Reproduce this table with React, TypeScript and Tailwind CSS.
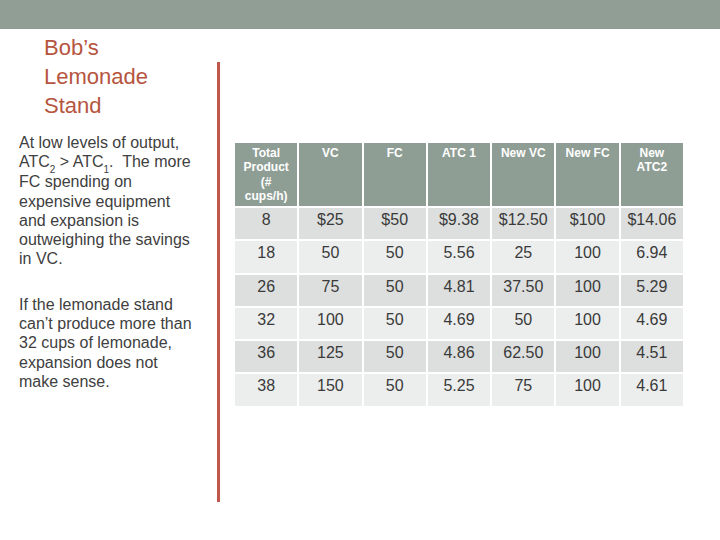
import React from 'react'

const headers = ['Total Product (# cups/h)', 'VC', 'FC', 'ATC 1', 'New VC', 'New FC', 'New ATC2']

const rows = [
  ['8', '$25', '$50', '$9.38', '$12.50', '$100', '$14.06'],
  ['18', '50', '50', '5.56', '25', '100', '6.94'],
  ['26', '75', '50', '4.81', '37.50', '100', '5.29'],
  ['32', '100', '50', '4.69', '50', '100', '4.69'],
  ['36', '125', '50', '4.86', '62.50', '100', '4.51'],
  ['38', '150', '50', '5.25', '75', '100', '4.61'],
]

export default function App() {
  return (
    <div className="w-[720px] h-[540px] bg-white overflow-hidden font-['Liberation_Sans',Arial,sans-serif]">
      {/* Top band */}
      <div className="h-[29px] bg-[#909e96]" />

      <div className="flex">
        {/* Left column */}
        <div className="w-[217px] shrink-0">
          <h1 className="pl-[44px] pt-[4px] text-[22px] leading-[29px] text-[#b6553f]">
            Bob’s
            <br />
            Lemonade
            <br />
            Stand
          </h1>

          <div className="pl-[19px] mt-[13px] text-[16px] leading-[19.3px] text-[#404040] whitespace-nowrap">
            <p>
              At low levels of output,
              <br />
              ATC<sub className="text-[10px] leading-none align-[-3px]">2</sub> &gt; ATC<sub className="text-[10px] leading-none align-[-3px]">1</sub>.&nbsp; The more
              <br />
              FC spending on
              <br />
              expensive equipment
              <br />
              and expansion is
              <br />
              outweighing the savings
              <br />
              in VC.
            </p>
            <p className="mt-[26px]">
              If the lemonade stand
              <br />
              can’t produce more than
              <br />
              32 cups of lemonade,
              <br />
              expansion does not
              <br />
              make sense.
            </p>
          </div>
        </div>

        {/* Divider */}
        <div className="w-[3px] h-[440px] mt-[33px] bg-[#c0574a] shrink-0" />

        {/* Table */}
        <div className="pl-[15px] pt-[114px]">
          <div className="grid grid-cols-7 w-[448px] gap-[2px]">
            {headers.map((h) => (
              <div
                key={h}
                className="h-[63px] bg-[#8f9e95] px-[4px] pt-[3px] text-center text-[12px] leading-[14.3px] font-bold text-white"
              >
                {h}
              </div>
            ))}
            {rows.map((r, i) =>
              r.map((c, j) => (
                <div
                  key={`${i}-${j}`}
                  className={`h-[31.3px] pt-[2px] text-center text-[16px] leading-[19px] text-[#3a3a3a] ${
                    i % 2 === 0 ? 'bg-[#dcdfde]' : 'bg-[#eceeed]'
                  }`}
                >
                  {c}
                </div>
              ))
            )}
          </div>
        </div>
      </div>
    </div>
  )
}
